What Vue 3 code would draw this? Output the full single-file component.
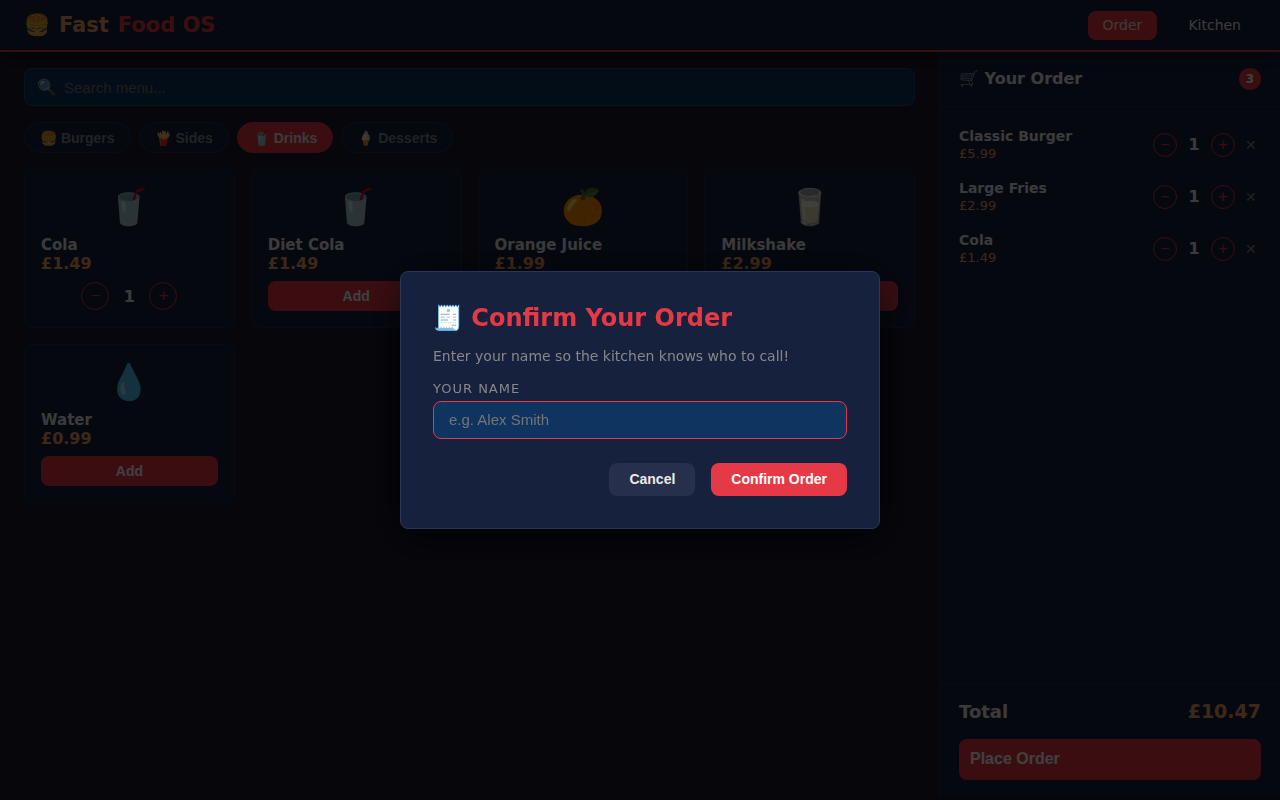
<script setup>
import { computed, ref } from 'vue'

const categories = [
  { id: 'burgers', label: '🍔 Burgers' },
  { id: 'sides', label: '🍟 Sides' },
  { id: 'drinks', label: '🥤 Drinks' },
  { id: 'desserts', label: '🍦 Desserts' }
]

const menu = [
  { id: 1, name: 'Classic Burger', price: 5.99, emoji: '🍔', category: 'burgers' },
  { id: 2, name: 'Large Fries', price: 2.99, emoji: '🍟', category: 'sides' },
  { id: 3, name: 'Cola', price: 1.49, emoji: '🥤', category: 'drinks' },
  { id: 4, name: 'Diet Cola', price: 1.49, emoji: '🥤', category: 'drinks' },
  { id: 5, name: 'Orange Juice', price: 1.99, emoji: '🍊', category: 'drinks' },
  { id: 6, name: 'Milkshake', price: 2.99, emoji: '🥛', category: 'drinks' },
  { id: 7, name: 'Water', price: 0.99, emoji: '💧', category: 'drinks' }
]

const search = ref('')
const activeCategory = ref('drinks')
const cart = ref([
  { id: 1, qty: 1 },
  { id: 2, qty: 1 },
  { id: 3, qty: 1 }
])
const showModal = ref(true)
const customerName = ref('')

const visibleItems = computed(() => {
  const term = search.value.trim().toLowerCase()
  if (term) {
    return menu.filter((item) => item.name.toLowerCase().includes(term))
  }
  return menu.filter((item) => item.category === activeCategory.value)
})

const cartLines = computed(() =>
  cart.value.map((line) => ({ ...menu.find((item) => item.id === line.id), qty: line.qty }))
)

const itemCount = computed(() => cart.value.reduce((sum, line) => sum + line.qty, 0))
const total = computed(() => cartLines.value.reduce((sum, line) => sum + line.price * line.qty, 0))

const money = (value) => '£' + value.toFixed(2)

const qtyOf = (id) => {
  const line = cart.value.find((l) => l.id === id)
  return line ? line.qty : 0
}

const removeItem = (id) => {
  cart.value = cart.value.filter((l) => l.id !== id)
}

const changeQty = (id, delta) => {
  const line = cart.value.find((l) => l.id === id)
  if (!line) {
    cart.value.push({ id, qty: 1 })
    return
  }
  line.qty += delta
  if (line.qty <= 0) removeItem(id)
}

const closeModal = () => {
  showModal.value = false
}

const confirmOrder = () => {
  if (!customerName.value.trim()) return
  cart.value = []
  customerName.value = ''
  closeModal()
}
</script>

<template>
  <div class="app">
    <header class="navbar">
      <div class="brand">
        <span>🍔</span>
        <span class="brand-fast">Fast</span>
        <span class="brand-food">Food OS</span>
      </div>
      <nav class="nav-links">
        <a href="#order" class="nav-link active">Order</a>
        <a href="#kitchen" class="nav-link">Kitchen</a>
      </nav>
    </header>

    <div class="layout">
      <main class="menu">
        <div class="search-bar">
          <span class="search-icon">🔍</span>
          <input v-model="search" type="text" placeholder="Search menu..." aria-label="Search menu" />
        </div>

        <div class="tabs">
          <button
            v-for="cat in categories"
            :key="cat.id"
            class="tab"
            :class="{ active: cat.id === activeCategory }"
            @click="activeCategory = cat.id"
          >
            {{ cat.label }}
          </button>
        </div>

        <div class="grid">
          <div v-for="item in visibleItems" :key="item.id" class="card">
            <div class="card-emoji">{{ item.emoji }}</div>
            <div class="card-name">{{ item.name }}</div>
            <div class="card-price">{{ money(item.price) }}</div>
            <div v-if="qtyOf(item.id)" class="stepper">
              <button class="round" aria-label="Remove one" @click="changeQty(item.id, -1)">−</button>
              <span class="qty">{{ qtyOf(item.id) }}</span>
              <button class="round" aria-label="Add one" @click="changeQty(item.id, 1)">+</button>
            </div>
            <button v-else class="add" @click="changeQty(item.id, 1)">Add</button>
          </div>
        </div>
      </main>

      <aside class="cart">
        <div class="cart-header">
          <h2>🛒 Your Order</h2>
          <span class="badge">{{ itemCount }}</span>
        </div>
        <ul class="cart-items">
          <li v-for="line in cartLines" :key="line.id" class="cart-item">
            <div class="cart-info">
              <span class="cart-name">{{ line.name }}</span>
              <span class="cart-price">{{ money(line.price) }}</span>
            </div>
            <div class="cart-controls">
              <button class="round small" aria-label="Remove one" @click="changeQty(line.id, -1)">−</button>
              <span class="qty">{{ line.qty }}</span>
              <button class="round small" aria-label="Add one" @click="changeQty(line.id, 1)">+</button>
              <button class="remove" aria-label="Remove item" @click="removeItem(line.id)">✕</button>
            </div>
          </li>
        </ul>
        <div class="cart-footer">
          <div class="total">
            <span>Total</span>
            <span class="total-value">{{ money(total) }}</span>
          </div>
          <button class="place-order" @click="showModal = true">Place Order</button>
        </div>
      </aside>
    </div>

    <div v-if="showModal" class="modal-overlay" @click.self="closeModal">
      <form class="modal" @submit.prevent="confirmOrder">
        <h2>🧾 Confirm Your Order</h2>
        <p>Enter your name so the kitchen knows who to call!</p>
        <label for="customer-name">Your Name</label>
        <input id="customer-name" v-model="customerName" type="text" placeholder="e.g. Alex Smith" />
        <div class="modal-actions">
          <button type="button" class="cancel" @click="closeModal">Cancel</button>
          <button type="submit" class="confirm">Confirm Order</button>
        </div>
      </form>
    </div>
  </div>
</template>

<style>
body {
  margin: 0;
  background: #1a1a2e;
}
</style>

<style scoped>
* {
  box-sizing: border-box;
}

.app {
  min-height: 100vh;
  display: flex;
  flex-direction: column;
  background: #1a1a2e;
  color: #eaeaea;
  font-family: 'DejaVu Sans', sans-serif;
  font-size: 16px;
  line-height: 19px;
}

button,
input {
  font-family: 'Liberation Sans', Arial, sans-serif;
}

button {
  border: none;
  cursor: pointer;
}

.navbar {
  position: relative;
  display: flex;
  align-items: center;
  justify-content: space-between;
  height: 52px;
  padding: 0 24px;
  background: #16213e;
  border-bottom: 2px solid #e63946;
  box-shadow: 0 4px 20px rgba(0, 0, 0, 0.4);
}

.brand {
  display: flex;
  gap: 9px;
  font-size: 21px;
  font-weight: bold;
}

.brand-fast {
  color: #f4a261;
}

.brand-food {
  color: #e63946;
}

.nav-links {
  display: flex;
  gap: 16px;
}

.nav-link {
  padding: 5px 15px;
  border-radius: 8px;
  color: #eaeaea;
  font-size: 14px;
  text-decoration: none;
}

.nav-link.active {
  background: #e63946;
}

.layout {
  flex: 1;
  display: flex;
}

.menu {
  flex: 1;
  padding: 16px 24px;
}

.search-bar {
  display: flex;
  align-items: center;
  gap: 7px;
  height: 38px;
  padding: 0 12px;
  background: #0f3460;
  border: 1px solid #2a4a74;
  border-radius: 8px;
}

.search-bar input {
  flex: 1;
  padding: 0;
  border: none;
  outline: none;
  background: none;
  color: #eaeaea;
  font-size: 15px;
}

.tabs {
  display: flex;
  gap: 8px;
  margin: 16px 0;
}

.tab {
  height: 31px;
  padding: 0 15px;
  border: 1px solid #2a3558;
  border-radius: 20px;
  background: #16213e;
  color: #888;
  font-size: 14px;
  font-weight: bold;
}

.tab.active {
  background: #e63946;
  border-color: #e63946;
  color: #eaeaea;
}

.grid {
  display: grid;
  grid-template-columns: repeat(auto-fill, minmax(180px, 1fr));
  gap: 16px;
}

.card {
  display: flex;
  flex-direction: column;
  padding: 16px;
  background: #16213e;
  border: 1px solid #222d4e;
  border-radius: 8px;
}

.card-emoji {
  margin-bottom: 8px;
  font-size: 35px;
  line-height: 42px;
  text-align: center;
}

.card-name {
  font-size: 15px;
  font-weight: bold;
  line-height: 18px;
}

.card-price {
  color: #f4a261;
  font-weight: bold;
}

.add {
  height: 30px;
  margin-top: 8px;
  border-radius: 8px;
  background: #e63946;
  color: #fff;
  font-size: 14px;
  font-weight: bold;
}

.stepper {
  display: flex;
  align-items: center;
  justify-content: center;
  gap: 12px;
  height: 30px;
  margin-top: 8px;
}

.round {
  display: flex;
  align-items: center;
  justify-content: center;
  width: 28px;
  height: 28px;
  padding: 0;
  border: 1px solid #e63946;
  border-radius: 50%;
  background: none;
  color: #e63946;
  font-size: 16px;
}

.round.small {
  width: 24px;
  height: 24px;
}

.qty {
  min-width: 16px;
  font-weight: bold;
  text-align: center;
}

.cart {
  display: flex;
  flex-direction: column;
  width: 341px;
  margin-bottom: 4px;
  background: #16213e;
  border-left: 1px solid #222d4e;
}

.cart-header {
  display: flex;
  align-items: center;
  justify-content: space-between;
  height: 55px;
  padding: 0 19px;
  border-bottom: 1px solid #222d4e;
}

.cart-header h2 {
  margin: 0;
  padding-bottom: 2px;
  font-size: 16px;
}

.badge {
  width: 22px;
  border-radius: 50%;
  background: #e63946;
  color: #fff;
  font-size: 12px;
  font-weight: bold;
  line-height: 22px;
  text-align: center;
}

.cart-items {
  flex: 1;
  margin: 0;
  padding: 12px 19px;
  list-style: none;
}

.cart-item {
  display: flex;
  align-items: center;
  justify-content: space-between;
  height: 52px;
  border-bottom: 1px solid #1d2846;
}

.cart-item:last-child {
  border-bottom-color: transparent;
}

.cart-info {
  display: flex;
  flex-direction: column;
  line-height: 18px;
}

.cart-name {
  font-size: 14px;
  font-weight: bold;
}

.cart-price {
  color: #f4a261;
  font-size: 13px;
}

.cart-controls {
  display: flex;
  align-items: center;
  gap: 9px;
}

.remove {
  padding: 0 4px;
  margin-left: -3px;
  background: none;
  color: #888;
  font-size: 14px;
}

.cart-footer {
  padding: 16px 19px;
  border-top: 1px solid #222d4e;
}

.total {
  display: flex;
  align-items: center;
  justify-content: space-between;
  height: 23px;
  margin-bottom: 16px;
  font-size: 18px;
  font-weight: bold;
}

.total-value {
  color: #f4a261;
  font-size: 19px;
}

.place-order {
  width: 100%;
  height: 41px;
  padding: 0 11px 2px;
  border-radius: 8px;
  background: #e63946;
  color: #fff;
  font-size: 16px;
  font-weight: bold;
  text-align: left;
}

.modal-overlay {
  position: fixed;
  inset: 0;
  display: flex;
  align-items: center;
  justify-content: center;
  background: rgba(0, 0, 0, 0.75);
}

.modal {
  width: 480px;
  max-width: 90%;
  padding: 32px;
  background: #16213e;
  border: 1px solid #2a3558;
  border-radius: 8px;
  box-shadow: 0 8px 40px rgba(0, 0, 0, 0.6);
}

.modal h2 {
  margin: 0 0 15px;
  color: #e63946;
  font-size: 24px;
  line-height: 28px;
}

.modal p {
  margin: 0 0 13px;
  color: #888;
  font-size: 14px;
}

.modal label {
  display: block;
  margin-bottom: 3px;
  color: #888;
  font-size: 13px;
  letter-spacing: 1px;
  text-transform: uppercase;
}

.modal input {
  width: 100%;
  height: 38px;
  padding: 0 15px 2px;
  border: 1px solid #e63946;
  border-radius: 8px;
  outline: none;
  background: #0f3460;
  color: #eaeaea;
  font-size: 15px;
}

.modal-actions {
  display: flex;
  justify-content: flex-end;
  gap: 16px;
  margin-top: 24px;
}

.modal-actions button {
  height: 33px;
  padding: 0 20px 2px;
  border-radius: 8px;
  font-size: 14px;
  font-weight: bold;
}

.cancel {
  background: #262f4b;
  color: #eaeaea;
}

.confirm {
  background: #e63946;
  color: #fff;
}
</style>
